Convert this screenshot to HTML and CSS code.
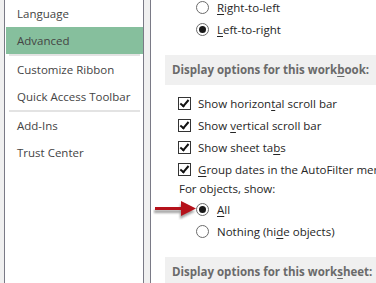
FILE: index.html
```html
<!DOCTYPE html>
<html lang="en">
<head>
    <meta charset="UTF-8">
    <meta name="viewport" content="width=device-width, initial-scale=1.0">
    <title>Excel Options - Advanced</title>
    <link rel="stylesheet" href="styles.css">
</head>
<body>

    <div class="window">
        <!-- Left menu -->
        <div class="nav">
            <div class="nav-item">Language</div>
            <div class="nav-item active">Advanced</div>
            <div class="nav-sep"></div>
            <div class="nav-item">Customize Ribbon</div>
            <div class="nav-item">Quick Access Toolbar</div>
            <div class="nav-sep"></div>
            <div class="nav-item">Add-Ins</div>
            <div class="nav-item">Trust Center</div>
        </div>

        <!-- Options pane -->
        <div class="pane">
            <div class="group first">
                <label class="row"><span class="radio"></span><span><u>R</u>ight-to-left</span></label>
                <label class="row"><span class="radio on"></span><span><u>L</u>eft-to-right</span></label>
            </div>

            <div class="section">Display options for this work<u>b</u>ook:</div>

            <div class="checks">
                <label class="row"><span class="check"></span><span>Show horizon<u>t</u>al scroll bar</span></label>
                <label class="row"><span class="check"></span><span>Show <u>v</u>ertical scroll bar</span></label>
                <label class="row"><span class="check"></span><span>Show sheet ta<u>b</u>s</span></label>
                <label class="row"><span class="check"></span><span><u>G</u>roup dates in the AutoFilter menu</span></label>
                <div class="sub-label">For objects, show:</div>
            </div>

            <div class="group objects">
                <label class="row pointed">
                    <!-- red arrow pointing at the option -->
                    <svg class="arrow" width="48" height="22" viewBox="0 0 48 22">
                        <defs>
                            <filter id="shadow" x="-20%" y="-50%" width="140%" height="200%">
                                <feGaussianBlur stdDeviation="1.3"/>
                            </filter>
                        </defs>
                        <g fill="#555" opacity="0.55" filter="url(#shadow)" transform="translate(-1 3)">
                            <rect x="2" y="9" width="30" height="3"/>
                            <polygon points="28,3 43,10.5 28,18"/>
                        </g>
                        <rect x="2" y="9" width="30" height="3" fill="#b5121b"/>
                        <polygon points="28,3 43,10.5 28,18" fill="#b5121b"/>
                    </svg>
                    <span class="radio on"></span><span><u>A</u>ll</span>
                </label>
                <label class="row"><span class="radio"></span><span>Nothing (hi<u>d</u>e objects)</span></label>
            </div>

            <div class="section">Display options for this work<u>s</u>heet:</div>
        </div>
    </div>

</body>
</html>
```

FILE: styles.css
```css
/* General Styles */
body {
    margin: 0;
    padding: 0;
    background-color: #f0f0f0;
    font-family: "Open Sans", "Noto Sans", sans-serif;
    font-size: 11.5px;
    color: #262626;
    overflow: hidden;
}

u {
    text-decoration: underline;
    text-underline-offset: 2px;
}

.window {
    display: flex;
    height: 283px;
    padding-left: 4px;
}

/* Left menu */
.nav {
    flex-shrink: 0;
    width: 137px;
    background-color: white;
    border-left: 1px solid #7a7a86;
    border-right: 1px solid #7a7a86;
    padding-left: 1px;
}

.nav-item {
    height: 27px;
    line-height: 27px;
    padding-left: 11px;
    color: #444;
    white-space: nowrap;
}

.nav-item.active {
    background-color: #86bf9d;
}

.nav-sep {
    height: 2px;
    margin: 0 3px 0 3px;
    background-color: #e3e3e3;
}

/* Options pane */
.pane {
    flex: 1;
    min-width: 0;
    overflow: hidden;
    margin-left: 6px;
    background-color: white;
    border-left: 1px solid #7a7a86;
}

.row {
    display: flex;
    align-items: center;
    height: 22px;
    white-space: nowrap;
}

.group {
    padding-left: 45px;
}

.group.first {
    margin-top: -4px;
    margin-bottom: 15px;
}

.group.objects {
    margin-bottom: 15px;
}

.group .row > span:last-child {
    margin-left: 8px;
}

.radio {
    flex-shrink: 0;
    width: 11px;
    height: 11px;
    border: 1px solid #6b6b6b;
    border-radius: 50%;
    background: white;
    display: flex;
    align-items: center;
    justify-content: center;
}

.radio.on::after {
    content: "";
    width: 7px;
    height: 7px;
    border-radius: 50%;
    background-color: #1a1a1a;
}

.section {
    margin-left: 14px;
    height: 30px;
    line-height: 30px;
    padding-left: 7px;
    background-color: #f0f0f0;
    color: #6a6a6a;
    font-weight: bold;
    white-space: nowrap;
}

.checks {
    padding: 7px 0 0 27px;
}

.checks .row > span:last-child {
    margin-left: 7px;
}

.check {
    flex-shrink: 0;
    width: 11px;
    height: 11px;
    border: 1px solid #333;
    background: white;
    position: relative;
}

.check::after {
    content: "";
    position: absolute;
    left: 3px;
    top: 0px;
    width: 3px;
    height: 7px;
    border-right: 2px solid #111;
    border-bottom: 2px solid #111;
    transform: rotate(40deg);
}

.sub-label {
    height: 18px;
    line-height: 18px;
    margin-left: 1px;
}

.pointed {
    position: relative;
}

.arrow {
    position: absolute;
    left: -43px;
    top: 0;
}
```
